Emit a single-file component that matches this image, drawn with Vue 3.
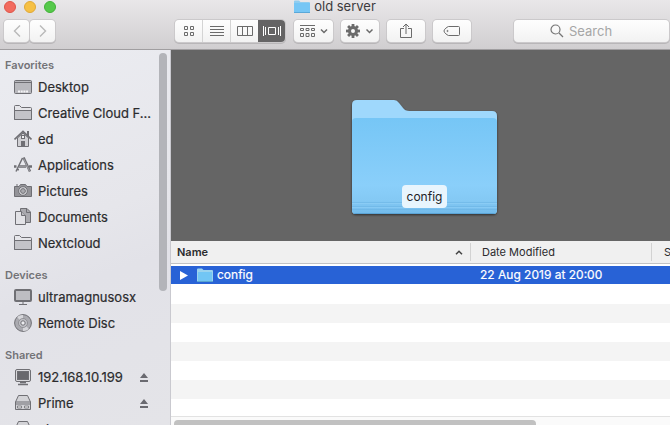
<script setup>
import { ref } from 'vue'

const sections = [
  {
    title: 'Favorites',
    items: [
      { label: 'Desktop', icon: 'desktop' },
      { label: 'Creative Cloud F...', icon: 'folder' },
      { label: 'ed', icon: 'home' },
      { label: 'Applications', icon: 'apps' },
      { label: 'Pictures', icon: 'camera' },
      { label: 'Documents', icon: 'docs' },
      { label: 'Nextcloud', icon: 'folder' },
    ],
  },
  {
    title: 'Devices',
    items: [
      { label: 'ultramagnusosx', icon: 'imac' },
      { label: 'Remote Disc', icon: 'disc' },
    ],
  },
  {
    title: 'Shared',
    items: [
      { label: '192.168.10.199', icon: 'pc', eject: true },
      { label: 'Prime', icon: 'server', eject: true },
      { label: 'plex', icon: 'server', eject: true },
    ],
  },
]
const query = ref('')
const teeth = [0, 45, 90, 135, 180, 225, 270, 315]
</script>

<template>
  <div class="finder">
    <header class="chrome">
      <div class="titlebar">
        <div class="lights">
          <button class="light red" aria-label="Close"></button>
          <button class="light amber" aria-label="Minimize"></button>
          <button class="light green" aria-label="Zoom"></button>
        </div>
        <h1 class="title">
          <svg class="mini" width="16" height="14" viewBox="0 0 16 14">
            <path d="M0 1.500Q0 .5 1 .5H5L6.500 2H15Q16 2 16 3V13H0Z" fill="#8fcdf0" />
            <rect y="3" width="16" height="10" fill="#76c6f5" />
            <path d="M0 12.500H16" stroke="#5aa8d8" />
          </svg>
          <span>old server</span>
        </h1>
      </div>
      <div class="toolbar">
        <div class="nav">
          <button class="btn small" aria-label="Back">
            <svg width="8" height="12" viewBox="0 0 8 12"><path d="M7 .5L1.500 6L7 11.500" fill="none" stroke="#b9b9b9" stroke-width="1.400" /></svg>
          </button>
          <button class="btn small" aria-label="Forward">
            <svg width="8" height="12" viewBox="0 0 8 12"><path d="M1 .5L6.500 6L1 11.500" fill="none" stroke="#b9b9b9" stroke-width="1.400" /></svg>
          </button>
        </div>
        <div class="views">
          <button class="view" aria-label="Icons">
            <svg width="10" height="10" viewBox="0 0 10 10" fill="none" stroke="#6b6b6b"><path d="M.5.5h3v3h-3zM6.500.5h3v3h-3zM.5 6.500h3v3h-3zM6.500 6.500h3v3h-3z" /></svg>
          </button>
          <button class="view" aria-label="List">
            <svg width="14" height="10" viewBox="0 0 14 10" stroke="#6b6b6b"><path d="M0 .5h14M0 3.500h14M0 6.500h14M0 9.500h14" /></svg>
          </button>
          <button class="view" aria-label="Columns">
            <svg width="16" height="10" viewBox="0 0 16 10" fill="none" stroke="#6b6b6b"><path d="M.5.5h15v9h-15zM5.500.5v9M10.500.5v9" /></svg>
          </button>
          <button class="view on" aria-label="Cover Flow">
            <svg width="18" height="10" viewBox="0 0 18 10" fill="none" stroke="#fff"><path d="M5.500 1.500h7v7h-7zM.5 0v10M2.500 1v8M15.500 1v8M17.500 0v10" /></svg>
          </button>
        </div>
        <button class="btn arrange" aria-label="Arrange">
          <svg width="28" height="12" viewBox="0 0 28 12" fill="none" stroke="#6b6b6b">
            <path d="M0 .5h15M.5 3.500h3v2h-3zM6 3.500h3v2h-3zM11.500 3.500h3v2h-3zM.5 8.500h3v3h-3zM6 8.500h3v3h-3zM11.500 8.500h3v3h-3z" />
            <path d="M21 4.500l3 3l3-3" stroke-width="1.500" />
          </svg>
        </button>
        <button class="btn" aria-label="Action">
          <svg width="28" height="14" viewBox="0 0 28 14" fill="none">
            <g fill="#6b6b6b"><rect v-for="a in teeth" :key="a" x="5.600" y="0" width="2.800" height="4" :transform="`rotate(${a} 7 7)`" /></g>
            <circle cx="7" cy="7" r="3.500" stroke="#6b6b6b" stroke-width="3" />
            <path d="M20.500 5.500l3 3l3-3" stroke="#6b6b6b" stroke-width="1.500" />
          </svg>
        </button>
        <button class="btn" aria-label="Share">
          <svg width="12" height="16" viewBox="0 0 12 16" fill="none" stroke="#6b6b6b"><path d="M4 5.500H.5v9h11v-9H8M6 11V1M3 4l3-3l3 3" /></svg>
        </button>
        <button class="btn" aria-label="Tags">
          <svg width="18" height="12" viewBox="0 0 18 12" fill="none" stroke="#6b6b6b"><path d="M5.500 1.500H15.500Q16.500 1.500 16.500 2.500V9.500Q16.500 10.500 15.500 10.500H5.500Q4.500 10.500 1.500 7.500Q.5 6 1.500 4.500Q4.500 1.500 5.500 1.500Z" /><circle cx="4.500" cy="6" r=".6" /></svg>
        </button>
        <label class="search">
          <svg width="14" height="14" viewBox="0 0 14 14" fill="none" stroke="#757575" stroke-width="1.200"><circle cx="5.500" cy="5.500" r="4.500" /><path d="M9 9l4 4" /></svg>
          <input v-model="query" type="text" placeholder="Search" aria-label="Search" />
        </label>
      </div>
    </header>

    <div class="body">
      <nav class="sidebar">
        <section v-for="s in sections" :key="s.title" class="group">
          <h2>{{ s.title }}</h2>
          <ul>
            <li v-for="i in s.items" :key="i.label">
              <svg class="ico" width="18" height="18" viewBox="0 0 18 18" fill="none" stroke="#6f6f74">
                <template v-if="i.icon === 'desktop'">
                  <rect x=".5" y="2.500" width="17" height="13" rx="1" fill="#b9b9be" />
                  <path d="M1 4.500h16" /><path d="M4 13.500h10" stroke="#f4f4f6" stroke-width="2" stroke-dasharray="2 .7" />
                </template>
                <template v-else-if="i.icon === 'folder'">
                  <path d="M.5 15.500V2.500Q.5 1.500 1.500 1.500H5.500L7.500 3.500H16.500Q17.500 3.500 17.500 4.500V15.500Z" fill="#e6e6ea" />
                  <path d="M.5 6.500H17.500V15.500H.5Z" fill="#c3c3c8" />
                </template>
                <template v-else-if="i.icon === 'home'">
                  <path d="M3.500 8v8.500h11V8L9 3Z" fill="#d0d0d4" />
                  <path d="M13 1v5l2 2V1z" fill="#6f6f74" stroke="none" />
                  <path d="M.5 9.500L9 1.500L17.500 9.500" stroke-width="1.700" />
                  <rect x="7.500" y="5.500" width="3" height="3" fill="#f2f2f4" /><rect x="7" y="11" width="4" height="6" fill="#6f6f74" stroke="none" />
                </template>
                <template v-else-if="i.icon === 'apps'">
                  <path d="M8.500 2L2 15.500M2.800 13l2 1" stroke-width="1.500" />
                  <path d="M9.500 1.500L16 15.500" stroke-width="2.500" /><path d="M9.700 2.500L15.500 15" stroke="#b5b5ba" stroke-width=".7" />
                  <path d="M0 10.500h2.500M5 10.500h7M15 10.500h3" stroke-width="2.400" /><path d="M5 10.500h7" stroke="#a3a3a8" stroke-width=".7" />
                </template>
                <template v-else-if="i.icon === 'camera'">
                  <path d="M.5 4.500H5L6.500 2.500H11.500L13 4.500H17.500V14.500H.5Z" fill="#939398" />
                  <path d="M2 3h2" /><circle cx="9" cy="9" r="4.300" fill="#dedee2" /><circle cx="9" cy="9" r="2.400" fill="#aaaaaf" />
                </template>
                <template v-else-if="i.icon === 'docs'">
                  <path d="M6.500.5H13L16.500 4V14.500H6.500Z" fill="#aaaaaf" /><path d="M12.500.5V4.500H16.500" />
                  <path d="M1.500 3.500H7.500L11.500 7.500V16.500H1.500Z" fill="#e2e2e6" /><path d="M7.500 3.500V7.500H11.500" fill="#bbbbc0" />
                </template>
                <template v-else-if="i.icon === 'imac'">
                  <rect x="1" y="2" width="16" height="11" rx="1" fill="#bdbdc2" stroke-width="2" />
                  <path d="M8 14h2v2H8z" fill="#aaaaaf" stroke="none" /><path d="M5 16.500h8" />
                </template>
                <template v-else-if="i.icon === 'disc'">
                  <circle cx="9" cy="9" r="8.400" fill="#aaaab0" /><path d="M9 9L3 3Q6 .5 9 1ZM9 9L15 15Q12 17.500 9 17Z" fill="#d6d6da" stroke="none" />
                  <circle cx="9" cy="9" r="4.500" fill="#c2c2c7" stroke="#85858a" stroke-width=".8" /><circle cx="9" cy="9" r="2.200" fill="#ededf0" />
                </template>
                <template v-else-if="i.icon === 'pc'">
                  <rect x="1.500" y="1.500" width="15" height="12" rx="1.500" fill="#d9d9dd" /><rect x="3.500" y="3.500" width="11" height="8" fill="#68686d" />
                  <path d="M6 14.500h6M4 16.500h10" stroke-width="1.400" />
                </template>
                <template v-else>
                  <path d="M1.500 8L4.500 1.500H13.500L16.500 8V15.500H1.500Z" fill="#d3d3d7" />
                  <path d="M1.500 8h15M1.500 10h15" stroke-width="1.200" />
                  <path d="M3.500 12h4v2h-4zM10.500 12h4v2h-4z" fill="#eee" stroke-width=".8" />
                </template>
              </svg>
              <a href="#">{{ i.label }}</a>
              <button v-if="i.eject" class="eject" aria-label="Eject">
                <svg width="8" height="9" viewBox="0 0 8 9" fill="#6a6a70"><path d="M4 0L8 5H0ZM0 7H8V9H0Z" /></svg>
              </button>
            </li>
          </ul>
        </section>
        <div class="thumb"></div>
      </nav>

      <main class="main">
        <div class="flow">
          <figure>
            <svg width="151" height="120" viewBox="0 0 151 120">
              <defs>
                <linearGradient id="front" x1="0" y1="0" x2="0" y2="1">
                  <stop offset="0" stop-color="#76c6f6" /><stop offset=".7" stop-color="#8acffa" />
                  <stop offset=".86" stop-color="#84c9f4" /><stop offset="1" stop-color="#72bbec" />
                </linearGradient>
                <filter id="shade" x="-5%" y="-5%" width="110%" height="112%"><feDropShadow dx="0" dy="1" stdDeviation="1.300" flood-opacity=".55" /></filter>
                <clipPath id="shape"><path d="M3 8Q3 3 8 3H45Q48 3 50 6L54 11Q56 14 60 14H143Q148 14 148 19V113Q148 117 144 117H7Q3 117 3 113Z" /></clipPath>
              </defs>
              <path filter="url(#shade)" fill="#9fd8fc" d="M3 8Q3 3 8 3H45Q48 3 50 6L54 11Q56 14 60 14H143Q148 14 148 19V113Q148 117 144 117H7Q3 117 3 113Z" />
              <g clip-path="url(#shape)">
                <path d="M3 25Q3 21 7 21H144Q148 21 148 25V117H3Z" fill="url(#front)" />
                <path d="M3 105.500H148M3 109.500H148M3 112.500H148" stroke="#68b1e2" stroke-opacity=".5" />
                <path d="M3 106.500H148M3 110.500H148" stroke="#93d2f8" stroke-opacity=".5" />
                <path d="M3 116.500H148" stroke="#5ba4d6" />
              </g>
            </svg>
            <figcaption>config</figcaption>
          </figure>
        </div>
        <table>
          <colgroup><col class="c-name" /><col class="c-date" /><col /></colgroup>
          <thead>
            <tr>
              <th class="sorted"><div><span>Name</span><svg width="8" height="5" viewBox="0 0 8 5"><path d="M1 4.200L4 1.200L7 4.200" fill="none" stroke="#444" stroke-width="1.500" /></svg></div></th>
              <th>Date Modified</th>
              <th>Size</th>
            </tr>
          </thead>
          <tbody>
            <tr class="selected">
              <td>
                <div class="file">
                  <svg width="8" height="9" viewBox="0 0 8 9"><path d="M0 0L8 4.500L0 9Z" fill="#fff" /></svg>
                  <svg class="mini" width="16" height="14" viewBox="0 0 16 14">
                    <path d="M0 1.500Q0 .5 1 .5H5L6.500 2H15Q16 2 16 3V13.500H0Z" fill="#9bd3ee" />
                    <rect x="1" y="4" width="14" height="9" fill="#72c6f4" /><path d="M0 13.500H16" stroke="#5aa5cf" />
                  </svg>
                  <span>config</span>
                </div>
              </td>
              <td>22 Aug 2019 at 20:00</td>
              <td></td>
            </tr>
            <tr v-for="n in 7" :key="n"><td></td><td></td><td></td></tr>
          </tbody>
        </table>
        <div class="hbar"><div class="hthumb"></div></div>
      </main>
    </div>
  </div>
</template>

<style>
body { margin: 0; overflow: hidden; }
</style>

<style scoped>
* { box-sizing: border-box; }
svg { display: block; flex: none; }
button { font: inherit; padding: 0; border: 0; }
h1, h2, ul, figure { margin: 0; padding: 0; font: inherit; }
.finder {
  height: 100vh;
  display: flex;
  flex-direction: column;
  overflow: hidden;
  font: 13px/18px Inter, "Liberation Sans", sans-serif;
  color: #2b2b2d;
}
.chrome {
  flex: none;
  background: linear-gradient(#e9e7e9, #d0ced0);
  border-bottom: 1px solid #a09ea0;
}
.titlebar { display: grid; grid-template: 13px / 1fr auto 1fr; align-items: center; }
.lights { display: flex; gap: 8px; padding-left: 4px; }
.light { width: 12px; height: 12px; border-radius: 50%; border: 1px solid; }
.red { background: #f26b5f; border-color: #df5549; }
.amber { background: #f6c044; border-color: #e0a836; }
.green { background: #56c94b; border-color: #42b138; }
.title { display: flex; align-items: center; gap: 4px; line-height: 13px; color: #3c3b3d; }
.toolbar { display: flex; align-items: center; padding: 7px 1px 7px 4px; gap: 8px; }
.nav { display: flex; gap: 1px; margin-right: 112px; }
.btn, .views, .search {
  flex: none;
  display: flex;
  align-items: center;
  justify-content: center;
  height: 22px;
  border-radius: 4px;
  background: linear-gradient(#fefefe, #f2f2f2);
  box-shadow: 0 0 0 1px #cbc9cb, 0 1px 0 1px #b8b6b8;
}
.btn { width: 38px; }
.btn.small { width: 25px; }
.views { width: 110px; overflow: hidden; }
.view { flex: 1; height: 22px; display: flex; align-items: center; justify-content: center; background: none; border-left: 1px solid #d4d4d4; }
.view:first-child { border-left: 0; }
.view.on { background: #656465; border: 0; }
.btn.arrange { width: 39px; margin-left: 1px; }
.search { flex: 1; gap: 5px; margin-left: 35px; }
.search input {
  width: 55px;
  margin-right: 9px;
  padding: 0;
  border: 0;
  outline: 0;
  background: none;
  font: 13px/18px Inter, sans-serif;
}
.search input::placeholder { color: #a6a6a6; opacity: 1; }
.body { flex: 1; min-height: 0; display: flex; }
.sidebar {
  position: relative;
  flex: none;
  width: 171px;
  padding-top: 6px;
  overflow: hidden;
  background: linear-gradient(160deg, #ebecf1, #e6e6eb 45%, #e2e2e8 60%, #e4e4e8);
  border-right: 1px solid #c9c9cf;
}
.group { margin-bottom: 10px; }
.group h2 { padding-left: 5px; font-size: 11px; font-weight: 600; color: #737377; }
ul { list-style: none; }
li { display: flex; align-items: center; height: 26px; padding: 0 22px 0 14px; }
li a { margin-left: 6px; color: inherit; text-decoration: none; white-space: nowrap; -webkit-text-stroke: .2px; }
.eject { margin-left: auto; background: none; }
.thumb { position: absolute; top: 3px; right: 3px; width: 8px; height: 238px; border-radius: 4px; background: #b3b4b9; }
.main { flex: 1; min-width: 0; display: flex; flex-direction: column; background: #fff; overflow: hidden; }
.flow { flex: none; height: 191px; display: flex; justify-content: center; align-items: flex-start; padding: 47px 0 0 8px; background: #656565; }
figure { display: grid; justify-items: center; }
figure > * { grid-area: 1 / 1; }
figcaption { align-self: end; margin-bottom: 9px; padding: 3px 5px 2px; border-radius: 4px; background: #e8f5fd; color: #1d2226; font-size: 12px; }
table { flex: none; width: 100%; table-layout: fixed; border-collapse: separate; border-spacing: 0; }
.c-name { width: 300px; }
.c-date { width: 181px; }
th { height: 23px; padding: 0 0 0 11px; text-align: left; font-size: 11px; font-weight: 400; background: linear-gradient(90deg, #d2d2d2, #d2d2d2) right 2px / 1px 18px no-repeat #f0f0f0; border-bottom: 1px solid #c2c2c4; overflow: hidden; white-space: nowrap; }
th:last-child { background: #f0f0f0; padding-left: 12px; }
th.sorted { padding: 0 8px 0 6px; font-weight: 600; }
th.sorted div { display: flex; align-items: center; justify-content: space-between; }
thead tr { height: 23px; }
tbody::before { content: ""; display: table-row; height: 2px; }
td { height: 19px; padding: 0 0 0 9px; font-size: 12px; line-height: 18px; border-bottom: 1px solid #fff; white-space: nowrap; }
tbody tr:nth-child(odd) td { background: #f4f4f4; border-color: #f4f4f4; }
tbody tr:nth-child(2n) td { background: #fff; }
tbody tr:last-child td { height: 17px; }
tbody tr.selected td { background: #2862d6 padding-box; border-color: #fff; color: #fff; -webkit-text-stroke: .2px; }
.file { display: flex; align-items: center; }
.file .mini { margin: 0 4px 0 9px; }
.hbar { flex: 1; padding: 3px 0 0 3px; border-top: 1px solid #e2e2e2; background: #fafafa; }
.hthumb { width: 73%; height: 8px; border-radius: 4px; background: #c1c1c1; }
</style>
